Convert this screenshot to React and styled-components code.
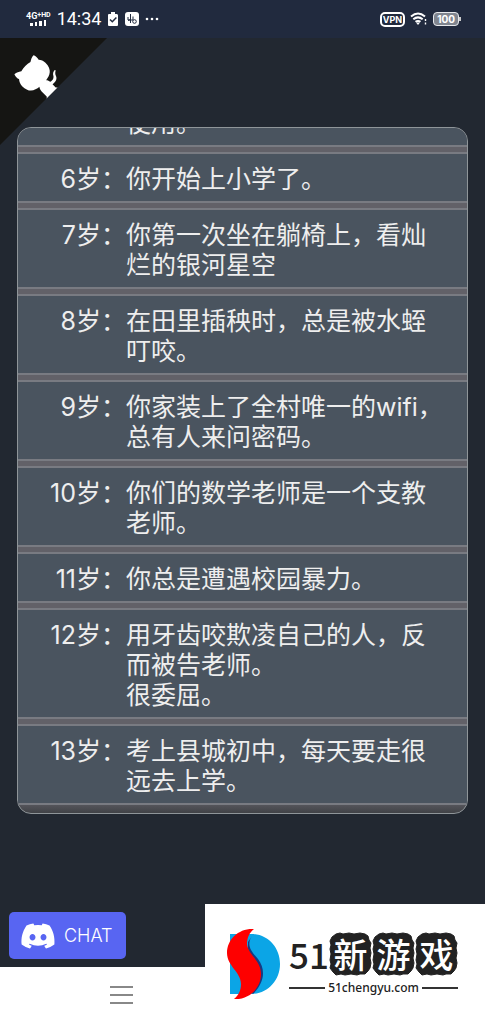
import React from 'react';
import styled, { createGlobalStyle } from 'styled-components';
import { FaDiscord } from 'react-icons/fa';

const GlobalStyle = createGlobalStyle`
  * {
    box-sizing: border-box;
  }

  body {
    margin: 0;
    background: #222831;
    color: #eee;
    font-family: Inter, 'Noto Sans CJK SC', sans-serif;
  }
`;

const Page = styled.div`
  display: flex;
  flex-direction: column;
  height: 100vh;
`;

const StatusBar = styled.header`
  display: flex;
  flex-shrink: 0;
  justify-content: space-between;
  align-items: center;
  height: 38px;
  padding: 0 26px;
  background: #212a3e;
  color: #fff;
`;

const StatusGroup = styled.div`
  display: flex;
  align-items: center;
  gap: ${(props) => props.$gap};
`;

const Network = styled.div`
  display: flex;
  flex-direction: column;
  align-items: center;
  font-family: Roboto, sans-serif;
  font-size: 9px;
  line-height: 8px;
  font-weight: 700;
`;

const NetworkLabel = styled.div`
  display: flex;

  small {
    font-size: 7px;
    line-height: 6px;
  }
`;

const Clock = styled.time`
  font-family: Roboto, sans-serif;
  font-size: 18px;
  line-height: 24px;
`;

const Vpn = styled.span`
  padding: 0 1px;
  border: 2px solid #fff;
  border-radius: 5px;
  font-size: 9px;
  line-height: 11px;
  font-weight: 700;
`;

const Battery = styled.span`
  position: relative;
  padding: 0 3px;
  border: 1px solid #e6e8ec;
  border-radius: 4px;
  background: #80858f;
  font-size: 10px;
  line-height: 12px;
  font-weight: 700;

  &::after {
    content: '';
    position: absolute;
    top: 4px;
    right: -3px;
    width: 2px;
    height: 4px;
    background: #ccc;
  }
`;

const Main = styled.main`
  position: relative;
  display: flex;
  flex: 1;
  min-height: 0;
  padding: 89px 17px 90px;
`;

const Corner = styled.a`
  position: absolute;
  top: 0;
  left: 0;
  line-height: 0;
`;

const Timeline = styled.ul`
  display: flex;
  flex: 1;
  flex-direction: column;
  justify-content: flex-end;
  margin: 0;
  padding: 0 0 8px;
  border: 1px solid #8f9599;
  border-radius: 14px;
  background: linear-gradient(#626168, #626168 98%, #404246);
  overflow: hidden;
  list-style: none;
`;

const Year = styled.li`
  display: flex;
  flex-shrink: 0;
  padding: 10px 21px 7px 0;
  border: 2px solid #797b82;
  border-width: 2px 0;
  background: #4a545f;
  font-size: 25px;
  line-height: 30px;

  & + & {
    margin-top: 5px;
  }
`;

const Age = styled.span`
  flex: 0 0 108px;
  text-align: right;
`;

const Events = styled.div`
  flex: 1;
`;

const BottomBar = styled.footer`
  display: flex;
  flex-shrink: 0;
  justify-content: space-between;
  height: 120px;
  background: linear-gradient(#222831 63px, #fff 63px);
`;

const Actions = styled.div`
  display: flex;
  flex-direction: column;
  align-items: flex-start;
  padding: 8px 0 0 9px;
`;

const ChatButton = styled.button`
  display: flex;
  align-items: center;
  gap: 8px;
  width: 117px;
  height: 47px;
  padding: 0 11px;
  border: 0;
  border-radius: 5px;
  background: #5865f2;
  color: #fff;
  font-family: inherit;
  font-size: 18px;
  font-weight: 300;
`;

const MenuButton = styled.button`
  margin: 26px 0 0 100px;
  padding: 0;
  border: 0;
  background: none;
  line-height: 0;
`;

const Brand = styled.a`
  display: flex;
  align-items: center;
  flex: 0 0 280px;
  padding: 0 27px 0 22px;
  gap: 6px;
  background: #fff;
  color: #222;
  text-decoration: none;

  svg {
    flex-shrink: 0;
  }
`;

const BrandText = styled.div`
  display: flex;
  flex-direction: column;
  gap: 4px;
  flex: 1;
  min-width: 0;
`;

const BrandName = styled.div`
  display: flex;
  align-items: center;
  justify-content: space-between;
  font-family: 'Noto Sans CJK SC', sans-serif;
  font-size: 35px;
  font-weight: 500;
  line-height: 44px;
`;

const Stamp = styled.span`
  position: relative;
  width: 43px;
  height: 44px;
  color: #fff;
  font-size: 34px;
  line-height: 43px;
  text-align: center;

  svg {
    position: absolute;
    inset: 0;
  }

  b {
    position: relative;
    font-weight: inherit;
  }
`;

const Domain = styled.div`
  display: flex;
  align-items: center;
  gap: 3px;
  font-family: 'Noto Sans', sans-serif;
  font-size: 12px;
  line-height: 16px;
  font-weight: 500;

  &::before,
  &::after {
    content: '';
    flex: 1;
    height: 2px;
    background: #333;
  }
`;

const years = [
  { events: ['使用。'] },
  { age: 6, events: ['你开始上小学了。'] },
  { age: 7, events: ['你第一次坐在躺椅上，看灿烂的银河星空'] },
  { age: 8, events: ['在田里插秧时，总是被水蛭叮咬。'] },
  { age: 9, events: ['你家装上了全村唯一的wifi，总有人来问密码。'] },
  { age: 10, events: ['你们的数学老师是一个支教老师。'] },
  { age: 11, events: ['你总是遭遇校园暴力。'] },
  { age: 12, events: ['用牙齿咬欺凌自己的人，反而被告老师。', '很委屈。'] },
  { age: 13, events: ['考上县城初中，每天要走很远去上学。'] },
];

const SignalIcon = () => (
  <svg width="17" height="6" viewBox="0 0 17 6" fill="#fff">
    <path d="M0 3h3v3H0zM5 2h2v4H5zM9 1h3v5H9zM14 0h2v6h-2z" />
  </svg>
);

const ClipboardIcon = () => (
  <svg width="12" height="15" viewBox="0 0 12 15">
    <path d="M2 2h2V0h4v2h2a2 2 0 0 1 1 1v10a1 1 0 0 1-1 1H2a1 1 0 0 1-1-1V3a1 1 0 0 1 1-1z" fill="#fff" />
    <path d="M3 7.5l2.3 2.3L9.4 5.5" fill="none" stroke="#212a3e" strokeWidth="1.5" />
  </svg>
);

const AppIcon = () => (
  <svg width="14" height="14" viewBox="0 0 14 14" fill="none" stroke="#212a3e">
    <rect width="14" height="14" rx="3" fill="#fff" stroke="none" />
    <path d="M5.5 2v9M3 5v3h5V4.5M3 8.5l2.5-1" />
    <circle cx="9.5" cy="9.5" r="1.8" />
  </svg>
);

const DotsIcon = () => (
  <svg width="14" height="4" viewBox="0 0 14 4" fill="#fff">
    <circle cx="2" cy="2" r="1.3" />
    <circle cx="7" cy="2" r="1.3" />
    <circle cx="12" cy="2" r="1.3" />
  </svg>
);

const WifiIcon = () => (
  <svg width="18" height="14" viewBox="0 0 18 14" fill="none" stroke="#fff" strokeWidth="2">
    <path d="M1 4.5Q8 -1.5 15 4.5M3.3 7.3Q8 3.4 12.7 7.3M5.5 9.8Q8 8 10.5 9.8" />
    <path d="M6 10.5h4l-2 2.5z" fill="#fff" stroke="none" />
    <path d="M15.5 7v2M15.5 10.5v2" strokeWidth="1.4" />
  </svg>
);

const GithubCorner = () => (
  <svg width="107" height="107" viewBox="0 0 250 250">
    <g transform="translate(250 0) scale(-1 1)">
      <path d="M0 0L250 250L250 0Z" fill="#151513" />
      <path
        d="M128.3 109C113.8 99.7 119 89.6 119 89.6C122 82.7 120.5 78.6 120.5 78.6C119.2 72 123.4 76.3 123.4 76.3C127.3 80.9 125.5 87.3 125.5 87.3C122.9 97.6 130.6 101.9 134.4 103.2"
        fill="#fff"
      />
      <path
        d="M115 115C114.9 115.1 118.7 116.5 119.8 115.4L133.7 101.6C136.9 99.2 139.9 98.4 142.2 98.6C133.8 88 127.5 74.4 143.8 58C148.5 53.4 154 51.2 159.7 51C160.3 49.4 163.2 43.6 171.4 40.1C171.4 40.1 176.1 42.5 178.8 56.2C183.1 58.6 187.2 61.8 190.9 65.4C194.5 69 197.7 73.2 200.1 77.6C213.8 80.2 216.3 84.9 216.3 84.9C212.7 93.1 206.9 96 205.4 96.6C205.1 102.4 203 107.8 198.3 112.5C181.9 128.9 168.3 122.5 157.7 114.1C157.9 116.9 156.7 120.9 152.7 124.9L141 136.5C139.8 137.7 141.6 141.9 141.8 141.8Z"
        fill="#fff"
      />
    </g>
  </svg>
);

const BrandLogo = () => (
  <svg width="56" height="72" viewBox="0 0 56 72">
    <path d="M3 6H22C40 5 53 19 53 36S40 66 24 66H3Z" fill="#0ba5e6" />
    <path d="M25 8C19 17 24 23 31 31C40 43 36 56 26 66L21 62V14Z" fill="#173a82" />
    <path
      d="M27 1C12 0 0 11 0 25C0 38 14 44 14 56C14 62 12 67 7 71C22 72 34 60 34 46C34 32 21 27 20 16C20 9 23 4 27 1Z"
      fill="#fe0000"
    />
  </svg>
);

const StampShape = () => (
  <svg width="43" height="44" viewBox="0 0 43 44">
    <path
      d="M7 2L11 1L14 2L20 1L25 2L31 1L36 2L39 4L40 8L42 11L41 16L42 21L41 26L42 31L41 36L39 39L36 42L31 42L28 43L22 42L16 43L12 42L7 43L4 40L1 36L2 32L1 28L2 22L1 17L2 13L1 9L3 5Z"
      fill="#222"
      stroke="#222"
      strokeLinejoin="round"
    />
  </svg>
);

export default function App() {
  return (
    <Page>
      <GlobalStyle />
      <StatusBar>
        <StatusGroup $gap="6px">
          <Network>
            <NetworkLabel>
              4G<small>+HD</small>
            </NetworkLabel>
            <SignalIcon />
          </Network>
          <Clock>14:34</Clock>
          <ClipboardIcon />
          <AppIcon />
          <DotsIcon />
        </StatusGroup>
        <StatusGroup $gap="5px">
          <Vpn>VPN</Vpn>
          <WifiIcon />
          <Battery>100</Battery>
        </StatusGroup>
      </StatusBar>
      <Main>
        <Corner href="#github" aria-label="GitHub">
          <GithubCorner />
        </Corner>
        <Timeline>
          {years.map(({ age, events }, index) => (
            <Year key={index}>
              <Age>{age && `${age}岁：`}</Age>
              <Events>
                {events.map((event) => (
                  <div key={event}>{event}</div>
                ))}
              </Events>
            </Year>
          ))}
        </Timeline>
      </Main>
      <BottomBar>
        <Actions>
          <ChatButton>
            <FaDiscord size={36} />
            CHAT
          </ChatButton>
          <MenuButton aria-label="Menu">
            <svg width="24" height="20" viewBox="0 0 24 20" stroke="#888" strokeWidth="2">
              <path d="M1 2H24M1 10H24M1 18H24" />
            </svg>
          </MenuButton>
        </Actions>
        <Brand href="#51chengyu">
          <BrandLogo />
          <BrandText>
            <BrandName>
              51
              {['新', '游', '戏'].map((char) => (
                <Stamp key={char}>
                  <StampShape />
                  <b>{char}</b>
                </Stamp>
              ))}
            </BrandName>
            <Domain>51chengyu.com</Domain>
          </BrandText>
        </Brand>
      </BottomBar>
    </Page>
  );
}
